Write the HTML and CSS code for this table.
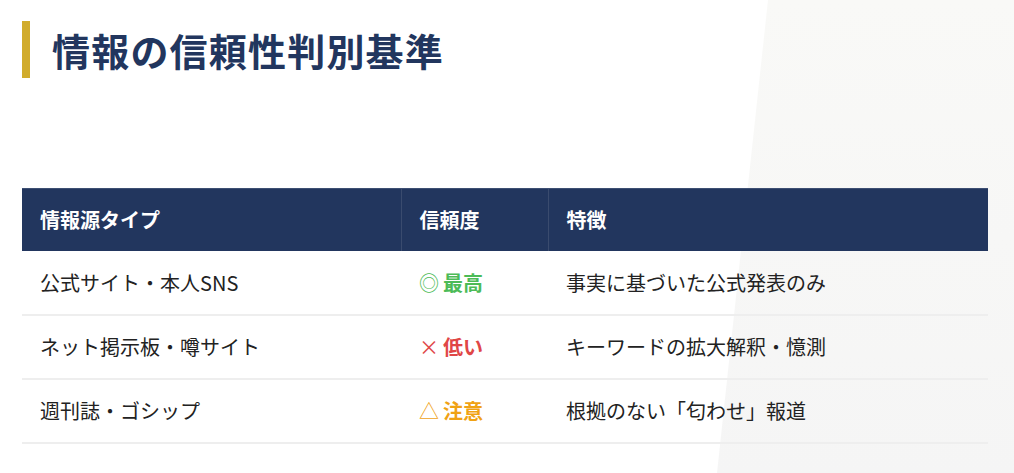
FILE: index.html
```html
<!DOCTYPE html>
<html lang="ja">
<head>
<meta charset="utf-8">
<title>情報の信頼性判別基準</title>
<link rel="stylesheet" href="styles.css">
</head>
<body>
<div class="page">
  <h1 class="title">情報の信頼性判別基準</h1>
  <table class="table">
    <thead>
      <tr>
        <th class="c1">情報源タイプ</th>
        <th class="c2">信頼度</th>
        <th class="c3">特徴</th>
      </tr>
    </thead>
    <tbody>
      <tr>
        <td>公式サイト・本人SNS</td>
        <td class="lvl high"><span class="mark">◎</span>最高</td>
        <td>事実に基づいた公式発表のみ</td>
      </tr>
      <tr>
        <td>ネット掲示板・噂サイト</td>
        <td class="lvl low"><span class="mark">×</span>低い</td>
        <td>キーワードの拡大解釈・憶測</td>
      </tr>
      <tr>
        <td>週刊誌・ゴシップ</td>
        <td class="lvl warn"><span class="mark">△</span>注意</td>
        <td>根拠のない「匂わせ」報道</td>
      </tr>
    </tbody>
  </table>
</div>
</body>
</html>
```

FILE: styles.css
```css
html, body {
  margin: 0;
  padding: 0;
  background: #ffffff;
}
body {
  width: 1014px;
  height: 473px;
  overflow: hidden;
  position: relative;
  font-family: "Noto Sans CJK JP", "Noto Sans", sans-serif;
  color: #222222;
}
body::before {
  content: "";
  position: absolute;
  inset: 0;
  z-index: 0;
  background: linear-gradient(180deg, #f9f9f7 0%, #f5f5f5 100%);
  clip-path: polygon(768px 0, 1014px 0, 1014px 473px, 717px 473px);
}
.page {
  position: relative;
  z-index: 1;
  padding: 21px 26px 0 22px;
}
.title {
  margin: 0;
  height: 57px;
  line-height: 57px;
  border-left: 8px solid #d1ac2c;
  padding-left: 22px;
  font-size: 38px;
  letter-spacing: 1.2px;
  font-weight: 700;
  color: #22365e;
}
.table {
  margin-top: 110px;
  width: 966px;
  border-collapse: collapse;
  font-size: 20px;
}
.table th {
  background: #22365e;
  color: #ffffff;
  font-weight: 700;
  text-align: left;
  height: 62px;
  padding: 0 18px;
  box-sizing: border-box;
  border-top: 1px solid #3d4f73;
}
.table th + th {
  border-left: 1px solid #3a4b6e;
}
.table .c1 { width: 379px; }
.table .c2 { width: 147px; }
.table td {
  height: 64px;
  padding: 0 18px;
  box-sizing: border-box;
  border-bottom: 2px solid #eeeeee;
}
.lvl {
  font-weight: 700;
}
.mark {
  font-weight: 400;
  margin-right: 4px;
}
.high { color: #4cbb57; }
.low { color: #e04646; }
.warn { color: #f0a214; }
```
